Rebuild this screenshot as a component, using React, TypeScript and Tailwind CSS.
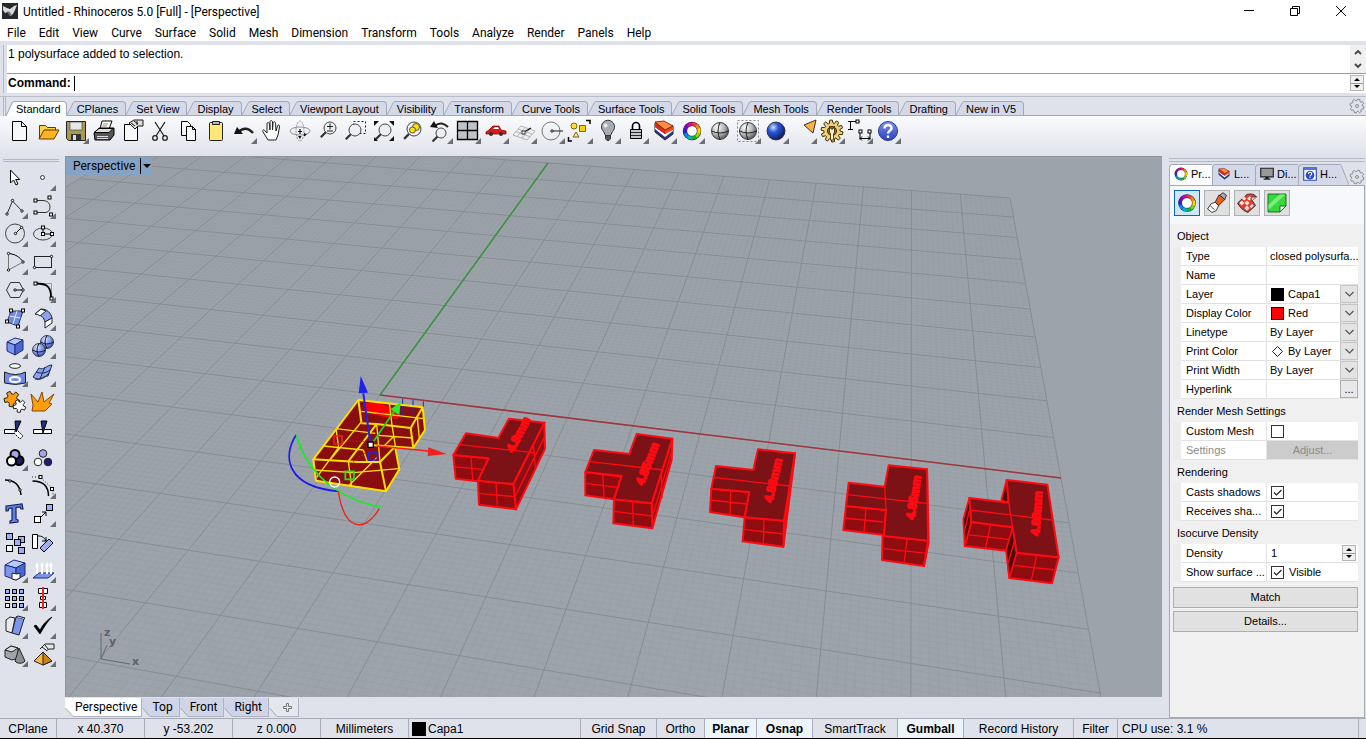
import React, { useState } from "react";

type Pt = [number, number];

/* ---------- Perspective grid ---------- */

const project = (u: number, v: number): Pt => {
  const w = 1 - 0.11374 * u + 0.46147 * v;
  return [(380 + 560.3 * u + 420.9 * v) / w, (395 + 28.63 * u - 156.8 * v) / w];
};

const segment = (a: Pt, b: Pt) =>
  `M${a[0].toFixed(2)} ${a[1].toFixed(2)}L${b[0].toFixed(2)} ${b[1].toFixed(2)}`;

const gridPath = (step: number, skip: number) => {
  let d = "";
  for (let i = -100; i <= 100; i += step) {
    if (skip && i % skip === 0) continue;
    const t = i / 100;
    d += segment(project(t, -1), project(t, 1));
    d += segment(project(-1, t), project(1, t));
  }
  return d;
};

const MINOR = gridPath(1, 10);
const MAJOR = gridPath(10, 0);

/* ---------- Icon helpers ---------- */

const Sq = ({ x, y, f = "#fff" }: { x: number; y: number; f?: string }) => (
  <rect x={x - 1.5} y={y - 1.5} width="3" height="3" fill={f} stroke="#000" />
);
const Dot = ({ x, y }: { x: number; y: number }) => (
  <circle cx={x} cy={y} r="1.2" fill="#fff" stroke="#000" strokeWidth="0.9" />
);
const Box = ({ x, y, s = 6, f = "#9db0f5" }: { x: number; y: number; s?: number; f?: string }) => (
  <rect x={x} y={y} width={s} height={s} fill={f} stroke="#000" />
);

const wheelColors = ["#f33", "#f80", "#fd0", "#8d0", "#0b3", "#0bb", "#08f", "#22d", "#80c", "#d0a"];
const Wheel = ({ cx = 14, cy = 14, r = 7 }: { cx?: number; cy?: number; r?: number }) => (
  <g>
    <circle cx={cx} cy={cy} r={r + 2.2} fill="#222" />
    {wheelColors.map((c, i) => {
      const a = (i * Math.PI) / 5 - Math.PI / 2;
      const b = a + Math.PI / 5 + 0.05;
      return (
        <path
          key={c}
          d={`M${cx + r * Math.cos(a)} ${cy + r * Math.sin(a)}A${r} ${r} 0 0 1 ${cx + r * Math.cos(b)} ${cy + r * Math.sin(b)}`}
          stroke={c}
          strokeWidth="3.4"
          fill="none"
        />
      );
    })}
    <circle cx={cx} cy={cy} r={r - 1.8} fill="#fff" stroke="#333" strokeWidth="0.6" />
  </g>
);

const Lens = ({ cx = 16, cy = 11, r = 6 }: { cx?: number; cy?: number; r?: number }) => (
  <g>
    <path d={`M${cx - r * 0.7} ${cy + r * 0.7}L${cx - r * 0.7 - 5} ${cy + r * 0.7 + 5}`} stroke="#333" strokeWidth="2.2" />
    <circle cx={cx} cy={cy} r={r} fill="#edf0f3" stroke="#444" />
  </g>
);

const Layers = () => (
  <g strokeLinejoin="round">
    <path d="M5 6v9l10 8 8-6V9z" fill="#27348b" stroke="#222" />
    <path d="M5 10v2l10 8 8-6v-3l-8 6z" fill="#fff" />
    <path d="M5 5v5l10 7v-4z" fill="#e8260c" />
    <path d="M15 13l8-4v4l-8 4z" fill="#f04a1c" />
    <path d="M5 5l9-1 9 5-8 4z" fill="#ff8a45" stroke="#5a1a00" strokeWidth="0.8" />
  </g>
);

const Ball = ({ fill, wire, cx = 14, cy = 14, r = 8.5 }: { fill: string; wire?: boolean; cx?: number; cy?: number; r?: number }) => (
  <g>
    <circle cx={cx} cy={cy} r={r} fill={fill} stroke="#222" strokeWidth="0.8" />
    {wire && (
      <path
        d={`M${cx - r} ${cy}Q${cx} ${cy + 4} ${cx + r} ${cy}M${cx} ${cy - r}Q${cx - 4} ${cy} ${cx} ${cy + r}`}
        stroke="#111"
        fill="none"
        strokeWidth="0.9"
      />
    )}
  </g>
);

const gearPath = (cx: number, cy: number, outer: number, inner: number, teeth: number) => {
  let d = "";
  for (let i = 0; i < teeth; i++) {
    const at = (k: number, r: number) => {
      const a = ((i + k) * 2 * Math.PI) / teeth;
      return `${(cx + r * Math.cos(a)).toFixed(1)} ${(cy + r * Math.sin(a)).toFixed(1)}`;
    };
    d += `${i ? "L" : "M"}${at(0, inner)}L${at(0.15, outer)}L${at(0.55, outer)}L${at(0.7, inner)}`;
  }
  return d + "Z";
};

type Tool = { name: string; more?: boolean; art: React.ReactNode };

const topTools: Tool[] = [
  { name: "New", art: <path d="M6.500 4.500h9l5 5v14h-14zM15.500 4.500v5h5" fill="#f6f8fa" stroke="#000" /> },
  {
    name: "Open",
    art: (
      <g stroke="#5b3b00">
        <path d="M5.500 21V8.500h6l2 2h8v3" fill="#ffd04a" />
        <path d="M5 22l5-9h15l-5 9z" fill="#ffb320" />
      </g>
    ),
  },
  {
    name: "Save",
    more: true,
    art: (
      <g>
        <path d="M4.500 4.500h19v19h-17l-2-2z" fill="#a79a55" stroke="#222" />
        <path d="M8 5h12v8H8z" fill="#e5e7ea" stroke="#333" strokeWidth="0.6" />
        <path d="M9 17h10v6H9z" fill="#333" />
        <path d="M11 18h3v5h-3z" fill="#ddd" />
      </g>
    ),
  },
  {
    name: "Print",
    art: (
      <g stroke="#000">
        <path d="M10 12l2-8h10l-3 8z" fill="#fff" />
        <path d="M4 16l5-5h15v7l-4 5H5z" fill="#555" />
        <path d="M4 15.500l5-4h14l-4 4z" fill="#ddd" />
        <path d="M7 19.500h11M7 21.500h11" stroke="#ddd" />
        <path d="M13 7h5M12 9h5" stroke="#777" strokeWidth="0.8" />
      </g>
    ),
  },
  {
    name: "Document Properties",
    art: (
      <g stroke="#000">
        <path d="M6.500 7.500h13v16h-13z" fill="#f6f8fa" />
        <path d="M11 6l5-3h9v6h-5l-3 3z" fill="#ddd" strokeWidth="0.9" />
        <path d="M13 6l4 3M16 4l4 3M19 4v4" strokeWidth="0.9" fill="none" />
      </g>
    ),
  },
  {
    name: "Cut",
    art: (
      <g fill="none" stroke="#222" strokeWidth="1.3">
        <path d="M9 5l9 14M19 5l-9 14" />
        <circle cx="9" cy="21" r="2.300" />
        <circle cx="19" cy="21" r="2.300" />
      </g>
    ),
  },
  {
    name: "Copy",
    art: (
      <g fill="#f8fafc" stroke="#000">
        <path d="M7.500 4.500h6l3 3v11h-9z" />
        <path d="M12.500 9.500h6l3 3v11h-9zM18.500 9.500v3h3" />
      </g>
    ),
  },
  {
    name: "Paste",
    art: (
      <g>
        <rect x="7.500" y="5.500" width="13" height="18" rx="1" fill="#ffe873" stroke="#222" />
        <path d="M10.500 7.500v-3h7v3z" fill="#bbb" stroke="#222" />
      </g>
    ),
  },
  {
    name: "Undo",
    more: true,
    art: (
      <g>
        <path d="M9 15C12 11 18 10 23 16" stroke="#222" strokeWidth="2.500" fill="none" />
        <path d="M4 17l3-7 6 7z" fill="#111" />
      </g>
    ),
  },
  {
    name: "Pan",
    art: (
      <path
        d="M10 23L5 15c-1-2 1-3 2-1l2 2V7c0-2 2-2 2.500 0l.5 6V5c0-2 2.500-2 2.500 0v8l.5-7c.5-2 2.500-1.500 2.500.5L18 14l1.500-5c.5-2 2.500-1 2 1L20 18l-2 5z"
        fill="#fafafa"
        stroke="#222"
      />
    ),
  },
  {
    name: "Rotate View",
    art: (
      <g fill="none" stroke="#777" strokeWidth="0.8">
        <ellipse cx="14" cy="14" rx="10" ry="4" />
        <ellipse cx="14" cy="14" rx="4" ry="10" strokeDasharray="2 1" />
        <path d="M14 12v5M12 14.500h4" stroke="#111" strokeWidth="1.200" />
        <path d="M12 19l2 3 1.500-3zM18 16l3 1.500-3 2z" fill="#111" stroke="none" />
      </g>
    ),
  },
  {
    name: "Zoom Dynamic",
    art: (
      <g>
        <Lens />
        <path d="M13 9.500h6M16 6.500v6M13 14h6" stroke="#222" fill="none" />
      </g>
    ),
  },
  {
    name: "Zoom Window",
    art: (
      <g>
        <path d="M11.500 4.500h12v12h-12z" fill="none" stroke="#222" strokeDasharray="2 2" />
        <Lens cx={13} cy={13} />
      </g>
    ),
  },
  {
    name: "Zoom Extents",
    art: (
      <g>
        <Lens cx={15} cy={13} />
        <path d="M4 4h5L4 9zM24 4h-5l5 5zM24 24h-5l5-5zM4 24h4l-4-4z" fill="#111" />
      </g>
    ),
  },
  {
    name: "Zoom Selected",
    art: (
      <g>
        <Lens cx={16} cy={12} r={7} />
        <circle cx="18" cy="10" r="3.500" fill="#ffe400" stroke="#555" />
        <circle cx="14.500" cy="13" r="3" fill="#ffe400" stroke="#555" />
      </g>
    ),
  },
  {
    name: "Undo View Change",
    more: true,
    art: (
      <g>
        <Lens cx={15} cy={16} r={5} />
        <path d="M9 9c4-4 9-3 13 1" stroke="#222" strokeWidth="2" fill="none" />
        <path d="M4 10l4-6 4 7z" fill="#111" />
      </g>
    ),
  },
  {
    name: "Four Viewports",
    more: true,
    art: <path d="M3.500 4.500h20v18h-20zM3.500 13.500h20M13.500 4.500v18" fill="#bfc3c8" stroke="#000" strokeWidth="1.300" />,
  },
  {
    name: "Named Views",
    more: true,
    art: (
      <g>
        <path d="M4 15l3-2 4-4h6l2 4 5 1v3H4z" fill="#e01818" stroke="#700" strokeWidth="0.7" />
        <path d="M11 12l2-2h3l1 2z" fill="#fff" />
        <circle cx="9" cy="17" r="2" fill="#333" />
        <circle cx="19" cy="17" r="2" fill="#333" />
      </g>
    ),
  },
  {
    name: "Set CPlane",
    more: true,
    art: (
      <g fill="none" stroke="#999" strokeWidth="0.700">
        <path d="M3 18l8-9 14 5-8 9zM6 14.700l14 5M8 12l14 5M7 19.500l8-9M12 21l8-9" />
        <path d="M14 15l7-4" stroke="#111" strokeWidth="1.200" />
        <Sq x={13.500} y={15.500} />
      </g>
    ),
  },
  {
    name: "Object Snap",
    more: true,
    art: (
      <g fill="none" stroke="#777">
        <circle cx="13" cy="14" r="9" />
        <path d="M14 14h11" stroke="#222" />
        <Dot x={14} y={14} />
      </g>
    ),
  },
  {
    name: "Select",
    more: true,
    art: (
      <g stroke="#765400" strokeWidth="0.900">
        <circle cx="8" cy="9" r="3" fill="#ffdc3c" />
        <path d="M13.500 8.500h6v6h-6z" fill="#ffd000" />
        <path d="M10 15l3 5H7z" fill="#ffdcae" />
        <path d="M20 3.500h4V7M2.500 20v4H6" stroke="#000" strokeWidth="1.500" fill="none" />
      </g>
    ),
  },
  {
    name: "Hide",
    more: true,
    art: (
      <g stroke="#333">
        <path d="M7.500 10a6.500 6.500 0 1 1 11 4.500l-2 4h-5l-2-4A6.500 6.500 0 0 1 7.500 10z" fill="#a9adb1" />
        <path d="M11.500 18.500h5v3l-1.500 2h-2l-1.500-2z" fill="#555" />
        <circle cx="11.500" cy="8.500" r="2" fill="#e8eaec" stroke="none" />
      </g>
    ),
  },
  {
    name: "Lock",
    more: true,
    art: (
      <g stroke="#000">
        <path d="M10.500 13V9a3.500 3.500 0 0 1 7 0v4" fill="none" strokeWidth="1.600" />
        <path d="M8.500 12.500h11v9h-11z" fill="#c4c7ca" />
        <path d="M9 15.500h10M9 18.500h10" strokeWidth="0.800" />
      </g>
    ),
  },
  { name: "Layers", more: true, art: <Layers /> },
  { name: "Properties", more: true, art: <Wheel /> },
  { name: "Shade", art: <Ball fill="url(#ballGray)" wire /> },
  {
    name: "Render Preview",
    more: true,
    art: (
      <g>
        <rect x="3.500" y="3.500" width="21" height="21" fill="none" stroke="#888" strokeDasharray="2 2" />
        <Ball fill="url(#ballGray)" wire />
      </g>
    ),
  },
  { name: "Render", more: true, art: <Ball fill="url(#ballBlue)" r={9} /> },
  { name: "Spotlight", more: true, art: <path d="M14 8l12-5-3 13z" fill="#ffb43d" stroke="#333" /> },
  {
    name: "Options",
    more: true,
    art: (
      <g stroke="#3d2c00">
        <path d={gearPath(14, 14, 11, 8, 10)} fill="#efd07a" />
        <circle cx="14" cy="14" r="4.500" fill="#8d7330" />
        <path d="M11.500 9v6l1 2v6h3v-6l1-2V9l-1.500 3h-2z" fill="#f7edce" strokeWidth="0.8" />
      </g>
    ),
  },
  {
    name: "Dimension",
    more: true,
    art: (
      <g stroke="#000" fill="none">
        <path d="M4.500 4.500v8M2 4.500h5M2 12.500h5M4.500 4.500h9M14 14.500v8M24 14.500v8M14 21.500h10" />
        <path d="M16 19.500l-2 2 2 2M22 19.500l2 2-2 2" />
        <Sq x={11.500} y={4.500} />
        <Sq x={14.500} y={14.500} />
        <Sq x={23.500} y={14.500} />
      </g>
    ),
  },
  {
    name: "Help",
    more: true,
    art: (
      <g>
        <circle cx="14" cy="14" r="9.500" fill="url(#help)" stroke="#2b3990" />
        <path d="M10.500 11.500c0-5 7.500-4.500 7 0-.2 2-3.500 2.500-3.500 5M14 18.500V21" stroke="#fff" strokeWidth="2.400" fill="none" />
      </g>
    ),
  },
];

const sideTools: Tool[] = [
  { name: "Select objects", art: <path d="M9.500 6v13l3-3 2.500 5 2-1-2.300-4.500h4z" fill="#fff" stroke="#000" /> },
  { name: "Point", more: true, art: <circle cx="13.500" cy="13.500" r="2" fill="#fff" stroke="#333" /> },
  {
    name: "Polyline",
    more: true,
    art: (
      <g>
        <path d="M6 22l5.500-13L21 19" fill="none" stroke="#333" />
        <Dot x={6} y={22} />
        <Dot x={11.500} y={8.500} />
        <Dot x={21} y={19} />
      </g>
    ),
  },
  {
    name: "Curve",
    more: true,
    art: (
      <g>
        <path d="M6 8.500h8c9 0 9 12 2 12H6" fill="none" stroke="#333" />
        <Sq x={6.500} y={8.500} />
        <Sq x={20.500} y={5.500} />
        <Sq x={6.500} y={20.500} />
        <Sq x={22} y={22.500} />
      </g>
    ),
  },
  {
    name: "Circle",
    more: true,
    art: (
      <g>
        <circle cx="14" cy="13.500" r="9.500" fill="none" stroke="#444" />
        <path d="M14.500 13.500l6-6" stroke="#000" />
        <Dot x={14.500} y={13.500} />
        <Dot x={20.500} y={7.500} />
      </g>
    ),
  },
  {
    name: "Ellipse",
    more: true,
    art: (
      <g>
        <ellipse cx="14" cy="14" rx="9.500" ry="6" fill="none" stroke="#444" />
        <path d="M14 14V7M14 14h9" stroke="#000" fill="none" />
        <Sq x={14} y={7.500} />
        <Sq x={14} y={14} />
        <Sq x={23} y={14} />
      </g>
    ),
  },
  {
    name: "Arc",
    more: true,
    art: (
      <g>
        <path d="M7.500 22V5.500" stroke="#777" />
        <path d="M7.500 22L22 14" stroke="#777" />
        <path d="M7.500 5.500C14 6 19 9 22 14" fill="none" stroke="#000" />
        <Dot x={7.500} y={5.500} />
        <Dot x={22} y={14} />
        <Dot x={7.500} y={22} />
      </g>
    ),
  },
  {
    name: "Rectangle",
    more: true,
    art: (
      <g>
        <rect x="5.500" y="8.500" width="17" height="11" fill="none" stroke="#222" />
        <Dot x={22.500} y={8.500} />
        <Dot x={5.500} y={19.500} />
      </g>
    ),
  },
  {
    name: "Polygon",
    more: true,
    art: (
      <g>
        <path d="M9.500 6.500h9l4 7.500-4 7.500h-9L5.500 14z" fill="none" stroke="#333" />
        <path d="M14 14h8" stroke="#000" />
        <Dot x={14} y={14} />
        <Dot x={22} y={14} />
      </g>
    ),
  },
  {
    name: "Fillet Curves",
    more: true,
    art: (
      <g>
        <path d="M7 7.500h15.500v15" fill="none" stroke="#999" />
        <path d="M7 7.500c11 0 15 3 15 14" fill="none" stroke="#000" strokeWidth="1.800" />
        <Sq x={6.500} y={7.500} />
        <Sq x={22.500} y={22.500} />
      </g>
    ),
  },
  {
    name: "Surface",
    more: true,
    art: (
      <g>
        <path d="M10 7h12l-5 15-11-4z" fill="#6f8be6" stroke="#222a60" />
        <path d="M8.500 12l11 2M16 7l-4 13" stroke="#e6ebff" />
        <Sq x={10} y={6.500} />
        <Sq x={22} y={6.500} />
        <Sq x={6} y={17.500} />
        <Sq x={17} y={22.500} />
      </g>
    ),
  },
  {
    name: "Sweep",
    more: true,
    art: (
      <g stroke="#222" strokeLinejoin="round">
        <path d="M12 5c6 0 10 4 11 9l-7 4c-1-4-4-8-10-8z" fill="#8ba3f0" />
        <path d="M6 10l6-5 5 2-6 5q-2-2-5-2zM16 18l7-4v5l-7 5z" fill="#fff" />
      </g>
    ),
  },
  {
    name: "Box",
    more: true,
    art: (
      <g stroke="#1c2a75" strokeLinejoin="round">
        <path d="M6 10l8-4 8 2-8 5z" fill="#b8c7ff" />
        <path d="M6 10l8 3v10l-8-4z" fill="#7b95f0" />
        <path d="M14 13l8-5v10l-8 5z" fill="#4c67cf" />
      </g>
    ),
  },
  {
    name: "Boolean Union",
    more: true,
    art: (
      <g>
        <Ball fill="url(#ballSoft)" cx={18} cy={10} r={6.500} wire />
        <Ball fill="url(#ballSoft)" cx={10} cy={18} r={6.500} wire />
      </g>
    ),
  },
  {
    name: "Project",
    more: true,
    art: (
      <g stroke="#222">
        <ellipse cx="14" cy="6" rx="5.500" ry="2.300" fill="#fff" />
        <path d="M3.500 12q11 5 21 0v11q-10 3-21 0z" fill="#6f8be6" />
        <ellipse cx="14" cy="19.500" rx="5" ry="2.500" fill="#6f8be6" stroke="#fff" strokeWidth="2" />
      </g>
    ),
  },
  {
    name: "Surface Edit",
    more: true,
    art: (
      <g>
        <path d="M4 17l6-9c5 3 7-3 13-3l-4 11c-6 0-8 6-15 1z" fill="#8ba3f0" stroke="#1c2a55" />
        <path d="M7 12q8 3 14-2M11 19l5-12M6 19q8 2 14-6" stroke="#1c2a55" fill="none" />
      </g>
    ),
  },
  {
    name: "Join",
    art: (
      <g stroke="#222">
        <path d={gearPath(11, 11, 8, 5, 5)} fill="#ff9d0a" />
        <path d={gearPath(18.500, 18, 6.500, 4, 5)} fill="#fff" />
      </g>
    ),
  },
  { name: "Explode", art: <path d="M2 6l7 8 4-10 2 10 10-8-5 9 3 1-7 7H3l1-6z" fill="#ff9d0a" stroke="#8a4600" /> },
  {
    name: "Trim",
    art: (
      <g stroke="#000">
        <path d="M3.500 13.500h12v4h-12z" fill="#fff" />
        <path d="M15 13l7 7-3 3-6-6z" fill="#fff" strokeDasharray="2 1" />
        <path d="M14 5h6l-5 11z" fill="#20307f" />
      </g>
    ),
  },
  {
    name: "Split",
    art: (
      <g stroke="#000">
        <path d="M4.500 13.500h18v4h-18z" fill="#fff" />
        <path d="M12 5h6l-4 12z" fill="#20307f" />
      </g>
    ),
  },
  {
    name: "Group",
    more: true,
    art: (
      <g stroke="#000" strokeWidth="2">
        <circle cx="18" cy="16.500" r="4.500" fill="#1c1f5e" />
        <circle cx="14" cy="10.500" r="4.500" fill="#a9a4e8" />
        <circle cx="10.500" cy="17" r="4.500" fill="#fff" />
      </g>
    ),
  },
  {
    name: "Ungroup",
    art: (
      <g stroke="#222">
        <circle cx="14" cy="9.500" r="3.800" fill="#a9a4e8" />
        <circle cx="9" cy="18" r="3.800" fill="#fff" />
        <circle cx="19" cy="18" r="3.800" fill="#1c1f6e" />
      </g>
    ),
  },
  {
    name: "Edit Points",
    art: (
      <g>
        <path d="M4 8c9 0 15 5 16 15" fill="none" stroke="#000" strokeWidth="1.500" />
        <Dot x={9} y={9} />
        <Dot x={19} y={18} />
      </g>
    ),
  },
  {
    name: "Control Points",
    more: true,
    art: (
      <g>
        <path d="M3.500 9c11 0 16 5 16 15" fill="none" stroke="#000" strokeWidth="1.500" />
        <path d="M3 5h8l13 12v8" fill="none" stroke="#222" strokeDasharray="1 2" />
        <Sq x={11.500} y={5} />
        <Sq x={23} y={17} />
      </g>
    ),
  },
  {
    name: "Text Object",
    art: (
      <path
        d="M5 6l16-2 1 5h-2l-1-2-4 .5V19l2 1v2l-8 1v-2l2-1V8L8 8.500 7 11H5z"
        fill="#6280e6"
        stroke="#17225e"
        strokeWidth="1.200"
      />
    ),
  },
  {
    name: "Move",
    more: true,
    art: (
      <g>
        <path d="M12 17l5-5m-4 0h4v4" stroke="#000" fill="none" />
        <Box x={5.500} y={16.500} f="#fff" />
        <Box x={17.500} y={4.500} />
      </g>
    ),
  },
  {
    name: "Copy Objects",
    art: (
      <g>
        <Box x={5.500} y={5.500} />
        <Box x={17.500} y={8.500} />
        <Box x={13.500} y={11.500} />
        <Box x={5.500} y={17.500} f="#fff" />
        <Box x={17.500} y={19.500} />
      </g>
    ),
  },
  {
    name: "Rotate",
    art: (
      <g stroke="#000">
        <path d="M3.500 6.500h5v14h-5z" fill="#fff" />
        <path d="M11 20l9-9 4 4-9 9z" fill="#9db0f5" />
        <path d="M9 8c4 0 6 1 8 5m0-4v4h-4" fill="none" />
      </g>
    ),
  },
  {
    name: "Solid Edit",
    more: true,
    art: (
      <g stroke="#1c2a75">
        <path d="M4 9l9-5 11 3-9 5z" fill="#b8c7ff" />
        <path d="M4 9l11 3v12L4 20z" fill="#7b95f0" />
        <path d="M15 12l9-5v12l-9 5z" fill="#4c67cf" />
        <path d="M11 17l5 1 3-1v5l-4 2-4-1z" fill="#fff" stroke="#222" />
      </g>
    ),
  },
  {
    name: "Extrude",
    more: true,
    art: (
      <g>
        <path d="M4 22l6-5h15l-6 5z" fill="#7b95f0" stroke="#1c2a75" />
        <path d="M8 18V9M13 18V9M18 18V9M22 18V9" stroke="#fff" strokeWidth="2" />
        <path d="M6 10l2-4 2 4zM11 10l2-4 2 4zM16 10l2-4 2 4zM20 10l2-4 2 4z" fill="#fff" />
      </g>
    ),
  },
  {
    name: "Array",
    more: true,
    art: (
      <g>
        {[5.5, 12.5, 19.5].map((y) => [4.5, 11.5, 18.5].map((x) => <Box key={`${x}-${y}`} x={x} y={y} s={4} />))}
        <Box x={4.500} y={19.500} s={4} f="#fff" />
      </g>
    ),
  },
  {
    name: "Align",
    more: true,
    art: (
      <g>
        <path d="M9.500 4.500h9v5h-9zM11.500 12.500h5v3h-5zM10.500 18.500h7v5h-7z" fill="#fff" stroke="#000" />
        <path d="M14 3v22" stroke="#e22" strokeWidth="2" />
      </g>
    ),
  },
  {
    name: "Flow",
    more: true,
    art: (
      <g stroke="#222">
        <path d="M5 8l4-3 5 1-3 15-6-2z" fill="#e6e9ee" />
        <path d="M15 5l8 2-5 16-7-2z" fill="#7b95f0" />
        <path d="M15 5l2-1 7 2-1 1" fill="#cdd7ff" />
      </g>
    ),
  },
  { name: "Check", more: true, art: <path d="M5 14l2-1 4 5C14 12 18 8 23 5c-5 5-8 10-12 17z" fill="#000" stroke="#000" strokeWidth="0.8" /> },
  {
    name: "Mesh",
    more: true,
    art: (
      <g stroke="#222">
        <path d="M4 10l6-4 7 2v10l-6 2-7-3z" fill="#a2a6aa" />
        <path d="M4 10l6-4 7 2-6 4z" fill="#d8dade" />
        <path d="M18 8l6 13c-2 3-8 3-10 0z" fill="#8b8f93" />
      </g>
    ),
  },
  {
    name: "Render Material",
    more: true,
    art: (
      <g stroke="#222">
        <path d="M14 12l9 9-9 4-9-4z" fill="#ffb43d" />
        <path d="M14 12v13l9-4z" fill="#c9821a" />
        <path d="M11 9l5-5h9v5h-5l-3 2" fill="#e4e6e8" />
        <path d="M13 7l4 3M16 5l3 4" fill="none" />
      </g>
    ),
  },
];

const ToolButton = ({ tool }: { tool: Tool }) => (
  <button type="button" aria-label={tool.name} className="block h-7 w-7 shrink-0">
    <svg viewBox="0 0 28 28" className="h-7 w-7" aria-hidden="true">
      {tool.art}
      {tool.more && <path d="M27 21v6h-6z" fill="#6b6e73" />}
    </svg>
  </button>
);

const SettingsGear = () => (
  <svg viewBox="0 0 16 16" className="h-4 w-4" aria-hidden="true">
    <path d={gearPath(8, 8, 7, 5.500, 8)} fill="none" stroke="#8a8d92" />
    <circle cx="8" cy="8" r="1.500" fill="none" stroke="#8a8d92" />
  </svg>
);

/* ---------- Top bars ---------- */

const menus = [
  "File", "Edit", "View", "Curve", "Surface", "Solid", "Mesh", "Dimension",
  "Transform", "Tools", "Analyze", "Render", "Panels", "Help",
];

const TitleBar = () => (
  <header className="flex h-[22px] shrink-0 items-center bg-white pr-0.5 font-[Roboto,sans-serif] text-xs">
    <svg viewBox="0 0 16 16" className="ml-0.5 h-4 w-4" aria-hidden="true">
      <rect width="16" height="16" fill="#26282c" />
      <path d="M1 3l4 2 3 1 4-3 3-1-2 5-2 4-3 2-2-4-3 1-2-3z" fill="#d9dbde" />
      <path d="M5 8l3 1 2 4-3-1z" fill="#70747a" />
    </svg>
    <h1 className="ml-[5px] mt-0.5">Untitled - Rhinoceros 5.0 [Full] - [Perspective]</h1>
    <div className="ml-auto flex">
      <button type="button" aria-label="Minimize" className="flex w-[46px] justify-center">
        <svg viewBox="0 0 12 12" className="h-3 w-3"><path d="M1 5.500h10" stroke="#000" /></svg>
      </button>
      <button type="button" aria-label="Restore" className="flex w-[46px] justify-center">
        <svg viewBox="0 0 12 12" className="h-3 w-3"><path d="M1.500 3.500h7v7h-7zM3.500 3.500v-2h7v7h-2" fill="none" stroke="#000" /></svg>
      </button>
      <button type="button" aria-label="Close" className="flex w-[46px] justify-center">
        <svg viewBox="0 0 12 12" className="h-3 w-3"><path d="M1 1l10 10M11 1L1 11" stroke="#000" /></svg>
      </button>
    </div>
  </header>
);

const MenuBar = () => (
  <nav className="flex h-[19px] shrink-0 items-center gap-[13px] bg-white px-[7px] pt-0.5 font-[Roboto,sans-serif] text-xs">
    {menus.map((m) => (
      <button key={m} type="button">{m}</button>
    ))}
  </nav>
);

const Spinner = ({ label }: { label: string }) => (
  <div className="flex h-4 w-3.5 flex-col border border-[#b5b5b5] bg-[#f0f0f0]">
    <button type="button" aria-label={`Increase ${label}`} className="flex flex-1 items-center justify-center border-b border-[#999]">
      <svg viewBox="0 0 6 3" className="h-[3px] w-1.5"><path d="M0 3l3-3 3 3z" /></svg>
    </button>
    <button type="button" aria-label={`Decrease ${label}`} className="flex flex-1 items-center justify-center">
      <svg viewBox="0 0 6 3" className="h-[3px] w-1.5"><path d="M0 0l3 3 3-3z" /></svg>
    </button>
  </div>
);

const CommandArea = () => (
  <section className="flex h-[55px] shrink-0 border-t-4 border-[#dfe2ea] bg-[#dfe2ea] text-xs">
    <div className="ml-[3px] mr-[3px] h-12 w-px bg-[#b4b8c4]" />
    <div className="flex h-12 flex-1 flex-col bg-white">
      <div className="flex h-[29px] justify-between border-b border-[#9a9a9a]">
        <p className="pl-px leading-[18px]">1 polysurface added to selection.</p>
        <div className="flex w-4 flex-col items-center justify-around bg-[#f0f0f0]">
          <svg viewBox="0 0 8 6" className="h-1.5 w-2"><path d="M1 5l3-3 3 3" fill="none" stroke="#444" strokeWidth="1.800" /></svg>
          <svg viewBox="0 0 8 6" className="h-1.5 w-2"><path d="M1 1l3 3 3-3" fill="none" stroke="#444" strokeWidth="1.800" /></svg>
        </div>
      </div>
      <div className="flex h-[18px] items-center pl-px pr-0.5">
        <label htmlFor="command" className="font-bold">Command:</label>
        <span className="ml-[3px] h-[15px] w-px bg-black" />
        <input id="command" className="min-w-0 flex-1 outline-none" />
        <Spinner label="history" />
      </div>
    </div>
  </section>
);

const toolTabs = [
  "Standard", "CPlanes", "Set View", "Display", "Select", "Viewport Layout", "Visibility", "Transform",
  "Curve Tools", "Surface Tools", "Solid Tools", "Mesh Tools", "Render Tools", "Drafting", "New in V5",
];

const ToolbarTabs = ({ active, onPick }: { active: string; onPick: (t: string) => void }) => (
  <div className="flex h-5 shrink-0 items-end border-t border-[#b9bdc9] bg-[#dfe2ea] text-[11px]">
    <div className="ml-[3px] h-full w-[3px] border-x border-[#b4b8c4]" />
    <div className="flex flex-1 items-end border-b border-[#a4a9b8]">
      {toolTabs.map((t) => {
        const on = t === active;
        return (
          <button key={t} type="button" onClick={() => onPick(t)} className={on ? "-mb-px flex h-[15px]" : "flex h-3.5"}>
            <svg viewBox="0 0 8 14" preserveAspectRatio="none" className="h-full w-2">
              <path d="M0 14L6 2q1-1.500 2-1.500V14z" fill={on ? "#fff" : "#d4d9ea"} />
              <path d="M0 14L6 2q1-1.500 2-1.500" fill="none" stroke="#a4a9b8" />
            </svg>
            <span
              className={
                on
                  ? "rounded-tr-sm border-r border-t border-[#a4a9b8] bg-white pl-0.5 pr-[5px] leading-[14px]"
                  : "rounded-tr-sm border-r border-t border-[#a4a9b8] bg-[#d4d9ea] pl-0.5 pr-[7px] leading-[14px]"
              }
            >
              {t}
            </span>
          </button>
        );
      })}
      <button type="button" aria-label="Toolbar options" className="ml-auto mr-px pb-px">
        <SettingsGear />
      </button>
    </div>
  </div>
);

/* ---------- 3D scene ---------- */

const Solid = ({ top, front, side, lines, dark }: { top: string; front: string; side?: string; lines: string; dark?: string }) => (
  <g stroke="#ff0a12" strokeWidth="6" strokeLinejoin="round">
    {side && <path d={side} fill="#8a1014" />}
    <path d={front} fill="#8f0c10" />
    {dark && <path d={dark} fill="#4a0709" strokeWidth="5" />}
    <path d={top} fill="#7d1216" />
    <path d={lines} fill="none" strokeWidth="4" />
  </g>
);

const Engraving = ({ x, y, angle, children }: { x: number; y: number; angle: number; children: string }) => (
  <text
    x={x}
    y={y}
    transform={`rotate(${angle} ${x} ${y})`}
    fill="#ff0a12"
    stroke="#ff0a12"
    strokeWidth="1.400"
    className="font-['Liberation_Sans',sans-serif] text-xs font-bold"
  >
    {children}
  </text>
);

const Scene = () => (
  <svg viewBox="66 157 1096 540" preserveAspectRatio="xMidYMid slice" className="absolute inset-0 h-full w-full" aria-label="Perspective viewport">
    <path d={MINOR} stroke="#8a9096" strokeWidth="0.500" opacity="0.380" fill="none" />
    <path d={MAJOR} stroke="#858a90" strokeWidth="0.900" fill="none" />
    <path d={segment(project(0, 0), project(1, 0))} stroke="#a0353f" strokeWidth="1.600" />
    <path d={segment(project(0, 0), project(0, 1))} stroke="#3a9340" strokeWidth="1.600" />

    <g transform="translate(280 370) scale(.33333)">
      {/* selected solid */}
      <path d="M235 90L428 112L435 180L400 234L345 230L358 298L318 364L108 332L100 268z" fill="#8a0d10" />
      <path d="M250 98L300 98L330 112L362 120L352 148L300 138L256 126z" fill="#ff0000" />
      <path d="M368 86v50M399 90v48M430 94v46" stroke="#2a2ab0" strokeWidth="3" />
      <g fill="none" stroke="#ffe000" strokeWidth="6" strokeLinejoin="round">
        <path d="M235 90L428 112L435 180L400 234L345 230L358 298L318 364L108 332L100 268z" />
        <path d="M100 268L235 276L300 276L345 230M345 230L280 226M244 160L290 162L392 174L428 112M392 174L400 234M235 90L244 156M300 276L318 364M290 162L205 274" />
        <path
          d="M168 176L286 190M328 100L336 166M244 124L432 146M105 300L220 308L356 296M205 274L215 348M312 228L340 200M336 166L346 228M412 142L418 206M168 176L176 232L110 322M130 228L250 240M244 156L150 270M292 262L205 348M290 162L300 276M296 196L398 204M250 240L262 276"
          strokeWidth="4"
        />
      </g>
      <path d="M188 214h70M220 275l40-30" stroke="#d02020" strokeWidth="3" strokeDasharray="5 5" />
      {/* gumball */}
      <path d="M272 225L250 70" stroke="#2222f0" strokeWidth="6" />
      <path d="M242 18L264 68L236 70z" fill="#2222f0" />
      <path d="M280 215L345 120" stroke="#10e020" strokeWidth="5" />
      <path d="M362 95L358 135L332 118z" fill="#20f030" />
      <path d="M290 228L445 243" stroke="#f02020" strokeWidth="5" />
      <path d="M445 232L500 252L443 258z" fill="#f02020" />
      <path d="M49 194C5 260 20 350 175 364" stroke="#1a1af0" strokeWidth="5" fill="none" />
      <path d="M49 194C75 290 150 380 302 412" stroke="#10f020" strokeWidth="5" fill="none" />
      <path d="M175 364C195 490 255 485 298 416" stroke="#f02020" strokeWidth="4" fill="none" />
      <path d="M162 198h24v24h-24z" stroke="#f02020" strokeWidth="5" fill="none" />
      <path d="M196 304h26v24h-26z" stroke="#10f020" strokeWidth="5" fill="none" />
      <path d="M266 246h26v24h-26z" stroke="#2222f0" strokeWidth="5" fill="none" />
      <circle cx="164" cy="336" r="15" stroke="#fff" strokeWidth="4" fill="none" />
      <path d="M264 216h16v16h-16z" fill="#fff" stroke="#000" strokeWidth="4" />

      <Solid
        side="M700 342L793 158L795 236L708 418z"
        front="M520 255L626 265L594 332L700 342L708 418L597 404L594 334L527 326z"
        top="M520 255L558 190L655 204L687 146L793 158L700 342L594 332L626 265z"
        lines="M540 224L760 248M573 260L578 330M523 290L606 298M648 338L652 410M596 370L705 380M794 200L704 382M760 222L766 290"
      />
    </g>
    <Engraving x={513} y={453} angle={-62}>4.8mm</Engraving>

    <g transform="translate(570 420) scale(.33333)">
      <Solid
        side="M245 250L307 56L305 120L247 325z"
        front="M46 156L155 170L132 238L245 250L247 325L130 310L132 238L46 226z"
        top="M46 156L72 90L178 102L200 42L307 56L245 250L132 238L155 168z"
        lines="M60 125L280 150M98 160L102 232M46 190L145 202M188 244L190 318M132 274L246 288M307 88L247 290M274 160L276 235"
      />
      <Solid
        side="M642 302L675 100L664 190L640 380z"
        front="M424 206L538 216L524 292L642 302L640 380L518 364L524 292L420 276z"
        top="M424 206L438 138L550 150L564 88L675 100L642 302L524 292L538 216z"
        lines="M430 172L660 198M482 212L480 284M422 240L530 252M582 298L580 372M522 328L640 342M668 140L642 340"
      />
    </g>
    <Engraving x={643} y={486} angle={-69}>4.85mm</Engraving>
    <Engraving x={772} y={503} angle={-77}>4.88mm</Engraving>

    <g transform="translate(830 440) scale(.33333)">
      <Solid
        side="M290 302L291 88L296 308L282 378z"
        front="M48 198L168 210L162 288L294 302L282 378L156 360L158 284L40 270z"
        top="M48 198L56 128L164 140L176 76L291 88L294 302L162 288L168 210z"
        lines="M52 164L290 190M108 204L102 276M44 234L160 246M232 294L222 370M162 326L290 340M164 140L168 210"
      />
      <Solid
        dark="M418 174L400 238L404 318L424 246zM530 120L514 180L536 188zM548 262L528 330L538 414L560 338z"
        front="M424 246L548 262L560 338L686 352L666 430L538 414L530 332L404 318z"
        top="M418 174L518 186L536 188L530 120L652 134L686 352L560 338L548 262L424 246z"
        lines="M420 210L665 240M482 254L466 326M412 284L535 298M620 346L604 422M548 376L678 390M536 188L548 262M402 280L418 212M534 370L554 300"
      />
    </g>
    <Engraving x={914} y={520} angle={-81}>4.85mm</Engraving>
    <Engraving x={1039} y={536} angle={-86}>4.88mm</Engraving>

    <path d="M101 633v26l29 5M101 659l6-14" stroke="#64686e" fill="none" />
    <g fill="#5d6167" className="font-['DejaVu_Sans',sans-serif] text-[11px] font-bold">
      <text x="104" y="636">z</text>
      <text x="109" y="645">y</text>
      <text x="132" y="665">x</text>
    </g>
  </svg>
);

const viewTabs = ["Perspective", "Top", "Front", "Right"];

const ViewTabs = ({ active, onPick }: { active: string; onPick: (t: string) => void }) => (
  <div className="flex h-[21px] shrink-0 items-start pt-px font-[Roboto,sans-serif] text-xs">
    {[...viewTabs, "+"].map((t) => {
      const on = t === active;
      const fill = on ? "#fff" : t === "+" ? "#e4e7ee" : "#d0d4e8";
      return (
        <button key={t} type="button" aria-label={t === "+" ? "New viewport" : t} onClick={() => t !== "+" && onPick(t)} className="flex h-[19px]">
          <svg viewBox="0 0 8 19" className="h-full w-2">
            <path d="M0 0v10l8 8.500V0z" fill={fill} />
            <path d="M.5 10l7.500 8.500" stroke="#a4a9b8" fill="none" />
          </svg>
          {t === "+" ? (
            <span className="flex h-full items-center border-b border-r border-[#b0b4c0] bg-[#e4e7ee] px-[5px]">
              <svg viewBox="0 0 11 11" className="h-[11px] w-[11px]">
                <path d="M4.500 1.500h2v3h3v2h-3v3h-2v-3h-3v-2h3z" fill="none" stroke="#777" />
              </svg>
            </span>
          ) : (
            <span
              className={
                on
                  ? "border-b border-r border-[#b0b4c0] bg-white pl-0.5 pr-1 leading-[18px]"
                  : "border-b border-r border-[#b0b4c0] bg-[#d0d4e8] pl-0.5 pr-1.5 leading-[18px]"
              }
            >
              {t}
            </span>
          )}
        </button>
      );
    })}
  </div>
);

/* ---------- Properties panel ---------- */

const Heading = ({ children }: { children: string }) => (
  <tr className="h-[23px]">
    <th colSpan={3} scope="rowgroup" className="bg-[#f0f0f0] p-0 pl-1 text-left font-normal">{children}</th>
  </tr>
);

const Row = ({ id, label, muted, children }: { id?: string; label: string; muted?: boolean; children?: React.ReactNode }) => (
  <tr className="h-[19px]">
    <td className="bg-[#ececec] p-0" />
    <th scope="row" className="whitespace-nowrap border-b border-[#e2e2e2] bg-white p-0 pl-[5px] text-left font-normal">
      <label htmlFor={id} className={muted ? "text-[#8a8a8a]" : ""}>{label}</label>
    </th>
    <td className="border-b border-l border-[#e2e2e2] bg-white p-0">{children}</td>
  </tr>
);

const Pick = ({ id, value, swatch }: { id: string; value: string; swatch?: React.ReactNode }) => (
  <div className="flex h-[18px] items-center pl-[3px]">
    {swatch}
    <select id={id} defaultValue={value} className="min-w-0 flex-1 appearance-none bg-transparent outline-none">
      <option>{value}</option>
    </select>
    <span className="pointer-events-none flex h-full w-[18px] items-center justify-center border border-[#c4c4c4] bg-[#e3e3e3]">
      <svg viewBox="0 0 9 6" className="h-1.5 w-[9px]"><path d="M.5 1l4 4 4-4" fill="none" stroke="#555" strokeWidth="1.200" /></svg>
    </span>
  </div>
);

const Tick = ({ id, on, text }: { id: string; on?: boolean; text?: string }) => (
  <div className="flex h-[18px] items-center gap-[5px] pl-1">
    <span className="relative flex h-[13px] w-[13px]">
      <input id={id} type="checkbox" defaultChecked={on} className="peer h-[13px] w-[13px] appearance-none border border-[#333] bg-white" />
      <svg viewBox="0 0 13 13" className="pointer-events-none absolute inset-0 hidden h-[13px] w-[13px] peer-checked:block">
        <path d="M3 6.500l2.500 2.500 5-5" fill="none" stroke="#222" strokeWidth="1.200" />
      </svg>
    </span>
    {text && <span>{text}</span>}
  </div>
);

const panelTabs: { text: string; art: React.ReactNode }[] = [
  { text: "Pr...", art: <Wheel r={9} /> },
  { text: "L...", art: <Layers /> },
  { text: "Di...", art: <g><path d="M3 4h22v15H3z" fill="#999" stroke="#222" strokeWidth="2" /><path d="M11 19h6v3h3v2H8v-2h3z" fill="#222" /></g> },
  {
    text: "H...",
    art: (
      <g>
        <path d="M3 3h22v22H3z" fill="#fff" stroke="#2b4bb0" strokeWidth="2" />
        <path d="M3 3h22v4H3z" fill="#5577d8" />
        <circle cx="14" cy="16" r="7.500" fill="#2b4bc8" />
        <path d="M11 14c0-4 6-4 6 0 0 2-3 2-3 4M14 19v2" stroke="#fff" strokeWidth="2" fill="none" />
      </g>
    ),
  },
];

const panelPages: { name: string; art: React.ReactNode }[] = [
  { name: "Object", art: <Wheel r={8} /> },
  {
    name: "Material",
    art: (
      <g stroke="#222">
        <path d="M3 21l4-6 5-2 4 4-3 6-5 2z" fill="#fff" />
        <path d="M6 17l5 5" />
        <path d="M12 13l4-8 4 1 3 4-7 7z" fill="#e86020" />
        <path d="M17 5l4-3 4 3-2 5-3-3z" fill="#a9acb0" />
      </g>
    ),
  },
  {
    name: "Texture Mapping",
    art: (
      <g stroke="#222">
        <path d="M3 14L14 4q8-2 11 3l-5 4 4 6-9 8q-8-3-12-11z" fill="#e8392a" />
        <path d="M5 14l3-3 3 3-3 3zM11 14l3-3 3 3-3 3zM8 9l3-3 2 3-2 2zM14 9l3-3 3 2-3 3zM11 20l3-3 3 3-3 3zM17 18l3-3 2 2-3 3z" fill="#fbe3de" stroke="none" />
        <path d="M25 7c-6-1-8 2-5 4" fill="#f3cfc8" />
      </g>
    ),
  },
  {
    name: "Decals",
    art: (
      <g stroke="#0b5a12">
        <path d="M3.500 3.500h21v14l-7 7h-14z" fill="#35d83f" />
        <path d="M4 16L17 4h7L4 22z" fill="#7cec7c" stroke="none" />
        <path d="M24.500 17.500h-7v7z" fill="#f4fff4" />
      </g>
    ),
  },
];

const PanelSide = () => (
  <aside className="flex w-[204px] shrink-0 flex-col pl-[7px] pr-px pt-0.5 text-[11px]">
    <div className="h-1 shrink-0 border-y border-[#b4b8c4]" />
    <div className="flex h-[23px] shrink-0 items-end">
      {panelTabs.map((t, i) => (
        <button
          key={t.text}
          type="button"
          className={
            i === 0
              ? "flex h-[21px] w-[43px] items-center gap-0.5 whitespace-nowrap rounded-tl border-l border-t border-[#a4a9b8] bg-[#fbfcfe] pb-0.5 pl-[3px]"
              : "flex h-[21px] w-[43px] items-center gap-0.5 whitespace-nowrap rounded-tl border-l border-t border-[#a4a9b8] bg-[#d4d9ea] pb-0.5 pl-[3px]"
          }
        >
          <svg viewBox="0 0 28 28" className="h-4 w-4 shrink-0" aria-hidden="true">{t.art}</svg>
          <span>{t.text}</span>
        </button>
      ))}
      <svg viewBox="0 0 8 21" className="h-[21px] w-2" aria-hidden="true">
        <path d="M0 1l8 20H0z" fill="#d4d9ea" />
        <path d="M0 1l8 20" stroke="#a4a9b8" />
      </svg>
      <button type="button" aria-label="Panel options" className="ml-auto"><SettingsGear /></button>
    </div>
    <div className="flex min-h-0 flex-1 flex-col border border-[#a4a9b8] bg-[#f0f0f0] px-[3px]">
      <div className="-mx-[3px] flex h-[38px] shrink-0 items-start gap-1 bg-[#f7f8fb] px-1 pt-1">
        {panelPages.map((p, i) => (
          <button
            key={p.name}
            type="button"
            aria-label={p.name}
            className={
              i === 0
                ? "flex h-[26px] w-[26px] items-center justify-center border border-[#0f64ad] bg-[#cce6fb]"
                : "flex h-[26px] w-[26px] items-center justify-center border border-[#b0b0b0] bg-[#e0e0e0]"
            }
          >
            <svg viewBox="0 0 28 28" className="h-6 w-6" aria-hidden="true">{p.art}</svg>
          </button>
        ))}
      </div>
      <div className="mr-[3px]">
        <table className="w-full table-fixed border-separate border-spacing-0 leading-[18px]">
          <colgroup>
            <col className="w-2" />
            <col className="w-[85px]" />
            <col />
          </colgroup>
          <tbody>
            <Heading>Object</Heading>
            <Row label="Type"><div className="whitespace-nowrap pl-[3px]">closed polysurfa...</div></Row>
            <Row id="name" label="Name"><input id="name" className="block h-[18px] w-full pl-1 outline-none" /></Row>
            <Row id="layer" label="Layer">
              <Pick id="layer" value="Capa1" swatch={<span className="ml-px mr-1 h-[13px] w-[13px] bg-black" />} />
            </Row>
            <Row id="color" label="Display Color">
              <Pick id="color" value="Red" swatch={<span className="ml-px mr-1 h-[13px] w-[13px] border border-black bg-[#f00]" />} />
            </Row>
            <Row id="linetype" label="Linetype"><Pick id="linetype" value="By Layer" /></Row>
            <Row id="printcolor" label="Print Color">
              <Pick
                id="printcolor"
                value="By Layer"
                swatch={<svg viewBox="0 0 13 13" className="ml-px mr-1 h-[13px] w-[13px]"><path d="M6.500 1.500l5 5-5 5-5-5z" fill="#fff" stroke="#222" /></svg>}
              />
            </Row>
            <Row id="printwidth" label="Print Width"><Pick id="printwidth" value="By Layer" /></Row>
            <Row id="hyperlink" label="Hyperlink">
              <div className="flex h-[18px]">
                <input id="hyperlink" className="min-w-0 flex-1 outline-none" />
                <button type="button" className="w-[18px] border border-[#adadad] bg-[#e8e8e8] leading-3">...</button>
              </div>
            </Row>
            <Heading>Render Mesh Settings</Heading>
            <Row id="custommesh" label="Custom Mesh"><Tick id="custommesh" /></Row>
            <Row label="Settings" muted>
              <button type="button" disabled className="block h-[18px] w-full bg-[#cccccc] text-[#8a8a8a]">Adjust...</button>
            </Row>
            <Heading>Rendering</Heading>
            <Row id="casts" label="Casts shadows"><Tick id="casts" on /></Row>
            <Row id="receives" label="Receives sha..."><Tick id="receives" on /></Row>
            <Heading>Isocurve Density</Heading>
            <Row id="density" label="Density">
              <div className="flex h-[18px] items-center pr-0.5">
                <input id="density" defaultValue="1" className="min-w-0 flex-1 pl-1 outline-none" />
                <Spinner label="density" />
              </div>
            </Row>
            <Row id="isocurves" label="Show surface ..."><Tick id="isocurves" on text="Visible" /></Row>
          </tbody>
        </table>
        <div className="mt-[5px] flex flex-col gap-[3px]">
          <button type="button" className="h-[21px] border border-[#adadad] bg-[#e1e1e1]">Match</button>
          <button type="button" className="h-[21px] border border-[#adadad] bg-[#e1e1e1]">Details...</button>
        </div>
      </div>
    </div>
  </aside>
);

/* ---------- Status bar ---------- */

const StatusBar = () => {
  const cell = "flex items-center justify-center border-r border-[#a9adb9]";
  const live = "flex items-center justify-center border-r border-[#a9adb9] bg-[#eef4fb] font-bold";
  return (
    <footer className="flex h-[21px] shrink-0 border-b border-t border-b-black border-t-[#a9adb9] bg-[#dfe2ea] text-xs">
      <div className={`${cell} w-[57px]`}>CPlane</div>
      <div className={`${cell} w-[88px]`}>x 40.370</div>
      <div className={`${cell} w-[88px]`}>y -53.202</div>
      <div className={`${cell} w-[88px]`}>z 0.000</div>
      <div className={`${cell} w-[88px]`}>Millimeters</div>
      <div className="flex flex-1 items-center gap-0.5 border-r border-[#a9adb9] pl-[3px]">
        <span className="h-3.5 w-3.5 bg-black" />Capa1
      </div>
      <button type="button" className={`${cell} w-[76px]`}>Grid Snap</button>
      <button type="button" className={`${cell} w-12`}>Ortho</button>
      <button type="button" className={`${live} w-[52px]`}>Planar</button>
      <button type="button" className={`${live} w-14`}>Osnap</button>
      <button type="button" className={`${cell} w-[85px]`}>SmartTrack</button>
      <button type="button" className={`${live} w-[66px]`}>Gumball</button>
      <button type="button" className={`${cell} w-[110px]`}>Record History</button>
      <button type="button" className={`${cell} w-11`}>Filter</button>
      <div className="mr-[7px] flex w-[241px] items-center border-r border-[#a9adb9] pl-1">CPU use: 3.1 %</div>
    </footer>
  );
};

/* ---------- App ---------- */

export default function App() {
  const [tab, setTab] = useState("Standard");
  const [view, setView] = useState("Perspective");
  return (
    <div className="flex h-screen w-full flex-col overflow-hidden bg-[#dfe2ea] font-['Liberation_Sans',Arial,sans-serif] text-black">
      <svg className="absolute h-0 w-0" aria-hidden="true">
        <defs>
          <radialGradient id="ballGray" cx=".35" cy=".3" r=".8">
            <stop offset="0" stopColor="#fff" /><stop offset=".5" stopColor="#b4b7ba" /><stop offset="1" stopColor="#444" />
          </radialGradient>
          <radialGradient id="ballBlue" cx=".35" cy=".3" r=".8">
            <stop offset="0" stopColor="#cfe0ff" /><stop offset=".35" stopColor="#2b57d8" /><stop offset="1" stopColor="#050f50" />
          </radialGradient>
          <radialGradient id="ballSoft" cx=".35" cy=".3" r=".8">
            <stop offset="0" stopColor="#d9e2ff" /><stop offset=".6" stopColor="#6f8be6" /><stop offset="1" stopColor="#2b3f9c" />
          </radialGradient>
          <linearGradient id="help" x1="0" y1="0" x2="0" y2="1">
            <stop offset="0" stopColor="#7a94f0" /><stop offset="1" stopColor="#2a3fb8" />
          </linearGradient>
        </defs>
      </svg>
      <TitleBar />
      <MenuBar />
      <CommandArea />
      <ToolbarTabs active={tab} onPick={setTab} />
      <div className="flex h-10 shrink-0 bg-gradient-to-b from-[#fafbfd] to-[#dfe2ea] pl-1.5 pt-px">
        {topTools.map((t) => <ToolButton key={t.name} tool={t} />)}
      </div>
      <div className="flex min-h-0 flex-1">
        <div className="w-[65px] shrink-0 pl-px pt-[3px]">
          <div className="ml-0.5 mr-1.5 h-[3px] border-y border-[#b4b8c4]" />
          <div className="mt-0.5 grid w-14 grid-cols-2">
            {sideTools.map((t) => <ToolButton key={t.name} tool={t} />)}
          </div>
        </div>
        <main className="flex min-w-0 flex-1 flex-col">
          <div className="relative min-h-0 flex-1 overflow-hidden border-l border-t border-[#8e949d] bg-[#9da3ab]">
            <Scene />
            <button type="button" className="absolute left-0 top-0 flex h-[18px] items-center bg-[#87a3c4] pl-[7px] font-[Roboto,sans-serif] text-xs">
              Perspective
              <span className="ml-[5px] flex h-4 items-center border-l border-black pl-0.5 pr-px">
                <svg viewBox="0 0 8 4" className="h-1 w-2"><path d="M0 0h8L4 4z" /></svg>
              </span>
            </button>
          </div>
          <ViewTabs active={view} onPick={setView} />
        </main>
        <PanelSide />
      </div>
      <StatusBar />
    </div>
  );
}
